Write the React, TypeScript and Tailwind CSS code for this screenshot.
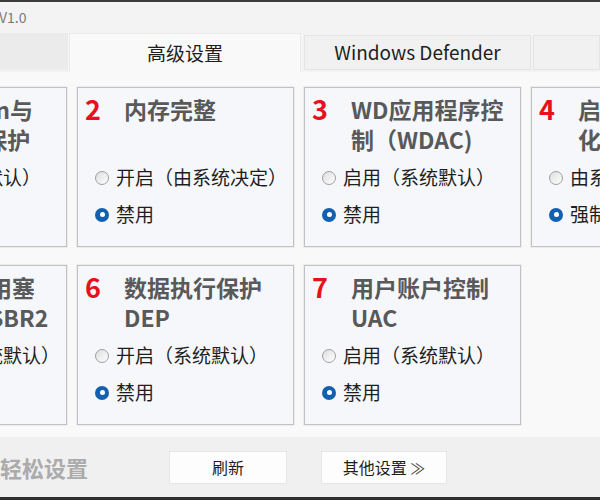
type Opt = { label: string; checked?: boolean };
type Card = { num: string; lines: string[]; options: Opt[] };

const cards: (Card | null)[] = [
  { num: '1', lines: ['Meltdown与', 'Spectre保护'], options: [{ label: '启用（系统默认）' }, { label: '禁用', checked: true }] },
  { num: '2', lines: ['内存完整'], options: [{ label: '开启（由系统决定）' }, { label: '禁用', checked: true }] },
  { num: '3', lines: ['WD应用程序控', '制（WDAC)'], options: [{ label: '启用（系统默认）' }, { label: '禁用', checked: true }] },
  { num: '4', lines: ['启用基于虚拟', '化的安全性'], options: [{ label: '由系统决定' }, { label: '强制关闭', checked: true }] },
  { num: '5', lines: ['分支推测用塞', '内核防护SBR2'], options: [{ label: '开启（由系统默认）' }, { label: '禁用', checked: true }] },
  { num: '6', lines: ['数据执行保护', 'DEP'], options: [{ label: '开启（系统默认）' }, { label: '禁用', checked: true }] },
  { num: '7', lines: ['用户账户控制', 'UAC'], options: [{ label: '启用（系统默认）' }, { label: '禁用', checked: true }] },
  null,
];

function Radio({ checked }: { checked?: boolean }) {
  if (checked) {
    return (
      <span className="w-[14px] h-[14px] rounded-full bg-[#1460b0] flex items-center justify-center shrink-0">
        <span className="w-[5px] h-[5px] rounded-full bg-white" />
      </span>
    );
  }
  return (
    <span className="w-[14px] h-[14px] rounded-full border border-[#a0a0a0] bg-gradient-to-br from-[#dedede] to-white shrink-0" />
  );
}

function SettingCard({ card }: { card: Card }) {
  return (
    <div className="h-[160px] bg-[#f6f7fb] border border-[#c2c2c2] shadow-[0_0_0_1px_#ececec]">
      <div className="flex pt-[6px] pl-[7px] pr-2 h-[70px]">
        <div className="w-[39px] shrink-0 text-[27px] leading-[30px] font-bold text-[#e8101c]">{card.num}</div>
        <div className="text-[23px] leading-[30px] font-bold text-[#595959] whitespace-nowrap">
          {card.lines.map((l) => (
            <div key={l}>{l}</div>
          ))}
        </div>
      </div>
      <div className="mt-[1px]">
        {card.options.map((o) => (
          <div key={o.label} className="h-[37px] flex items-center pl-[17px] gap-[7px] text-[19px] text-[#1e1e1e] whitespace-nowrap">
            <Radio checked={o.checked} />
            <span>{o.label}</span>
          </div>
        ))}
      </div>
    </div>
  );
}

export default function App() {
  return (
    <div className="w-[600px] h-[500px] overflow-hidden bg-[#f3f3f3] flex flex-col font-['Noto_Sans_CJK_SC',sans-serif]">
      <div className="h-[2px] bg-[#3b3b3b] shrink-0" />
      <div className="h-[31px] flex items-center text-[14px] text-[#7a7a7a] shrink-0">
        <span className="-ml-[1px]">V1.0</span>
      </div>

      <div className="h-[39px] flex items-start shrink-0">
        <div className="w-[68px] h-[37px] bg-[#ebebeb]" />
        <div className="w-[232px] h-[39px] ml-[1px] bg-[#f9f9f9] border-t border-x border-[#ececec] flex items-center justify-center text-[19px] text-[#1e1e1e]">
          高级设置
        </div>
        <div className="ml-[3px] mt-[2px] w-[227px] h-[35px] bg-[#f1f1f1] border border-[#e4e4e4] flex items-center justify-center text-[19px] text-[#1e1e1e]">
          Windows Defender
        </div>
        <div className="ml-[2px] mt-[2px] flex-1 h-[35px] bg-[#f1f1f1] border border-[#e4e4e4]" />
      </div>

      <div className="h-[365px] bg-[#f9f9f9] pt-[15px] overflow-hidden shrink-0">
        <div className="-ml-[150px] grid grid-cols-[repeat(4,217px)] gap-x-[10px] gap-y-[18px]">
          {cards.map((c, i) => (c ? <SettingCard key={i} card={c} /> : <div key={i} />))}
        </div>
      </div>

      <div className="flex-1 flex items-center bg-[#f0f0f0]">
        <div className="w-[169px] text-[22px] font-bold text-[#ababab] whitespace-nowrap">轻松设置</div>
        <button className="w-[118px] h-[33px] bg-[#fdfdfd] border border-[#e6e6e6] text-[16px] text-[#1e1e1e]">刷新</button>
        <button className="ml-[34px] w-[126px] h-[33px] bg-[#fdfdfd] border border-[#e6e6e6] text-[16px] text-[#1e1e1e]">
          其他设置 <span className="text-[15px] text-[#444]">≫</span>
        </button>
      </div>
      <div className="h-[3px] bg-[#2f2f2f] shrink-0" />
    </div>
  );
}
